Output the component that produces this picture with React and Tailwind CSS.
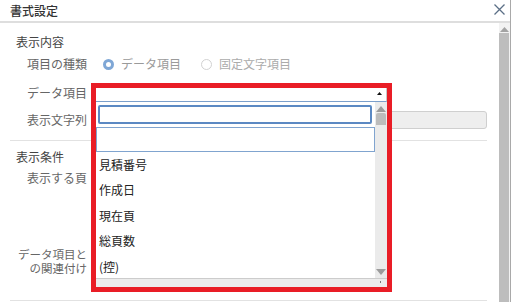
import React from 'react';

const items = ['見積番号', '作成日', '現在頁', '総頁数', '(控)'];

function Label({ children }) {
  return (
    <div className="w-[87px] shrink-0 text-right whitespace-nowrap text-[#666]">{children}</div>
  );
}

export default function App() {
  return (
    <div className="w-[512px] h-[302px] overflow-hidden bg-white relative text-[12px] font-['Noto_Sans_CJK_JP','Noto_Sans',sans-serif]">
      <div className="w-[511px] h-[302px] border-r border-[#a9a9a9] flex flex-col">
        {/* title bar */}
        <div className="h-[23px] shrink-0 border-b-2 border-[#dedede] flex items-center justify-between pl-[10px] pr-[5px]">
          <span className="text-[12px] leading-[20px] text-[#333] font-medium">書式設定</span>
          <svg width="11" height="11" viewBox="0 0 11 11" className="mb-[2px]">
            <path d="M0.5 0.5 L10.5 10.5 M10.5 0.5 L0.5 10.5" stroke="#5b6f86" strokeWidth="1.3" fill="none" />
          </svg>
        </div>

        <div className="flex flex-1 min-h-0">
          {/* form content */}
          <div className="flex-1 flex flex-col">
            <div className="mt-[10px] h-[18px] leading-[18px] pl-[16px] text-[#444]">表示内容</div>

            <div className="mt-[4px] h-[18px] flex items-center">
              <Label>項目の種類</Label>
              <div className="ml-[16px] w-[98px] flex items-center">
                <span className="w-[11px] h-[11px] rounded-full border-[3px] border-[#7fa7d6] bg-white" />
                <span className="ml-[7px] text-[#9a9a9a]">データ項目</span>
              </div>
              <div className="flex items-center">
                <span className="w-[11px] h-[11px] rounded-full border border-[#d2d2d2] bg-white" />
                <span className="ml-[7px] text-[#ababab]">固定文字項目</span>
              </div>
            </div>

            <div className="mt-[11px] h-[18px] flex items-center">
              <Label>データ項目</Label>
            </div>

            <div className="mt-[9px] h-[18px] flex items-center">
              <Label>表示文字列</Label>
              <div className="ml-[10px] w-[390px] h-[18px] rounded-[3px] border border-[#cfcfcf] bg-[#eeeeee]" />
            </div>

            <div className="mt-[11px] mx-[10px] mr-[12px] border-t border-[#e2e2e2]" />

            <div className="mt-[7px] h-[18px] leading-[18px] pl-[16px] text-[#444]">表示条件</div>

            <div className="mt-[3px] h-[18px] flex items-center">
              <Label>表示する頁</Label>
            </div>

            <div className="mt-[60px] flex flex-col items-end w-[87px] text-[11.5px] leading-[14px] text-[#666] whitespace-nowrap">
              <span>データ項目と</span>
              <span>の関連付け</span>
            </div>

            <div className="mt-[25px] mx-[10px] mr-[12px] border-t border-[#e2e2e2]" />
          </div>

          {/* dialog scrollbar */}
          <div className="w-[11px] shrink-0 flex flex-col bg-[#f2f2f2]">
            <div className="h-[10px] flex items-center justify-center">
              <svg width="9" height="5" viewBox="0 0 9 5" className="mt-[2px]">
                <path d="M4.5 0 L9 5 L0 5 Z" fill="#a3a3a3" />
              </svg>
            </div>
            <div className="flex-1 bg-[#bdbdbd] mr-[1px]" />
          </div>
        </div>
      </div>

      {/* open dropdown, highlighted */}
      <div className="absolute left-[91px] top-[83px] w-[301px] h-[209px] border-[5px] border-[#e91d26] bg-white flex flex-col">
        <div className="h-[14px] shrink-0 border-r border-b border-[#c8c8c8] border-b-[#7b9fcb] flex justify-end items-center pr-[4px]">
          <svg width="5" height="3" viewBox="0 0 5 3" className="mb-[2px]">
            <path d="M2.5 0 L5 3 L0 3 Z" fill="#111" />
          </svg>
        </div>

        <div className="flex-1 min-h-0 flex">
          <div className="flex-1 min-w-0 overflow-hidden flex flex-col">
            <div className="mt-[3px] ml-[2px] mr-[3px] h-[19px] shrink-0 rounded-[2px] border-2 border-[#5b89c3]" />
            <div className="mt-[3px] h-[25px] shrink-0 border border-[#80a4cf]" />
            {items.map((t) => (
              <div key={t} className="h-[25.5px] shrink-0 flex items-center pl-[3px] text-[#222]">
                {t}
              </div>
            ))}
          </div>
          <div className="w-[12px] shrink-0 bg-[#ebebeb] flex flex-col items-center">
            <svg width="10" height="6" viewBox="0 0 10 6" className="mt-[4px]">
              <path d="M5 0 L10 6 L0 6 Z" fill="#9c9c9c" />
            </svg>
            <div className="mt-[1px] w-[10px] h-[12px] rounded-t-[2px] bg-[#bcbcbc]" />
            <div className="flex-1" />
            <svg width="10" height="6" viewBox="0 0 10 6" className="mb-[3px]">
              <path d="M0 0 L10 0 L5 6 Z" fill="#9c9c9c" />
            </svg>
          </div>
        </div>

        <div className="h-[9px] shrink-0 border-t border-[#cccccc] bg-[#ececec] flex justify-end items-start pr-[6px]">
          <span className="mt-[2px] w-[1px] h-[2px] bg-[#777]" />
        </div>
      </div>
    </div>
  );
}
